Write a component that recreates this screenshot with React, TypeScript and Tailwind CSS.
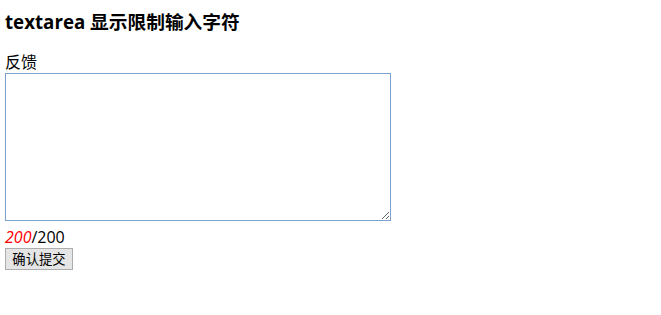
import * as React from "react";

const App = () => {
  const max = 200;
  const [text] = React.useState("");
  const left = max - text.length;

  return (
    <div className="min-h-[315px] bg-white px-[5px] text-black font-['Open_Sans','Noto_Sans_CJK_SC',sans-serif]">
      <h3 className="pt-[9px] text-[18.72px] leading-[25px] font-bold">
        textarea 显示限制输入字符
      </h3>
      <label htmlFor="feedback" className="mt-[18px] block text-[16px] leading-[21px]">
        反馈
      </label>
      <textarea
        id="feedback"
        maxLength={max}
        className="block h-[148px] w-[386px] border border-[#7da2ce] bg-white outline-none"
      />
      <div className="pt-[6px] text-[16px] leading-[21px]">
        <em className="text-[#ff0000]">{left}</em>/{max}
      </div>
      <button className="block h-[22px] w-[68px] border border-[#adadad] bg-[#e5e5e5] text-center text-[13.33px] leading-[18px] font-['Noto_Sans_CJK_SC',sans-serif]">
        确认提交
      </button>
    </div>
  );
};

export default App;
